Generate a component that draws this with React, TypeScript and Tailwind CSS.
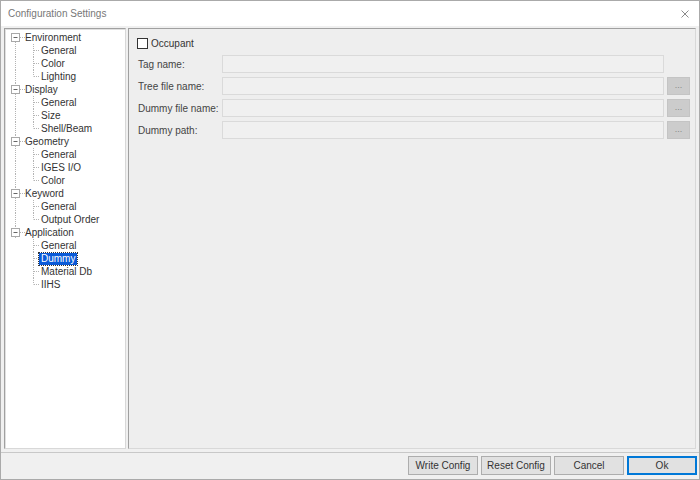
import React from "react";

type Node = { label: string; children: string[] };

const tree: Node[] = [
  { label: "Environment", children: ["General", "Color", "Lighting"] },
  { label: "Display", children: ["General", "Size", "Shell/Beam"] },
  { label: "Geometry", children: ["General", "IGES I/O", "Color"] },
  { label: "Keyword", children: ["General", "Output Order"] },
  { label: "Application", children: ["General", "Dummy", "Material Db", "IIHS"] },
];

const LINE = "#b4b4b4";

function RootGutter({ first, last }: { first: boolean; last: boolean }) {
  return (
    <svg width="20" height="13" className="shrink-0">
      {!first && <line x1="10.5" y1="0" x2="10.5" y2="2" stroke={LINE} strokeDasharray="1 1" />}
      {!last && <line x1="10.5" y1="11" x2="10.5" y2="13" stroke={LINE} strokeDasharray="1 1" />}
      <line x1="10.5" y1="11" x2="10.5" y2="13" stroke={LINE} strokeDasharray="1 1" />
      <rect x="6.5" y="2.5" width="8" height="8" fill="#fff" stroke="#a8a8a8" />
      <line x1="8.5" y1="6.5" x2="12.5" y2="6.5" stroke="#666" />
      <line x1="15" y1="6.5" x2="20" y2="6.5" stroke={LINE} strokeDasharray="1 1" />
    </svg>
  );
}

function ChildGutter({ rootCont, last }: { rootCont: boolean; last: boolean }) {
  return (
    <svg width="34" height="13" className="shrink-0">
      {rootCont && <line x1="10.5" y1="0" x2="10.5" y2="13" stroke={LINE} strokeDasharray="1 1" />}
      <line x1="28.5" y1="0" x2="28.5" y2={last ? 6.5 : 13} stroke={LINE} strokeDasharray="1 1" />
      <line x1="29" y1="6.5" x2="34" y2="6.5" stroke={LINE} strokeDasharray="1 1" />
    </svg>
  );
}

function Tree() {
  return (
    <div className="flex flex-col pt-[2px] text-[#333]">
      {tree.map((n, i) => {
        const lastRoot = i === tree.length - 1;
        return (
          <div key={n.label} className="flex flex-col">
            <div className="flex h-[13px] items-center">
              <RootGutter first={i === 0} last={lastRoot} />
              <span className="leading-[13px] whitespace-nowrap">{n.label}</span>
            </div>
            {n.children.map((c, j) => {
              const sel = n.label === "Application" && c === "Dummy";
              return (
                <div key={c + j} className="flex h-[13px] items-center">
                  <ChildGutter rootCont={!lastRoot} last={j === n.children.length - 1} />
                  <span
                    className={
                      "px-[2px] leading-[12px] whitespace-nowrap " +
                      (sel ? "bg-[#0a5ad8] text-white outline outline-1 outline-[#333] outline-dotted" : "")
                    }
                  >
                    {c}
                  </span>
                </div>
              );
            })}
          </div>
        );
      })}
    </div>
  );
}

function Field({ label, button }: { label: string; button: boolean }) {
  return (
    <div className="flex items-center h-[18px] ml-[1px]">
      <div className="w-[84px] shrink-0 text-[#444] whitespace-nowrap">{label}</div>
      <div className="w-[442px] h-[18px] border border-[#dadada] bg-[#f0f0f0]" />
      {button && (
        <div className="ml-[3px] w-[23px] h-[18px] bg-[#cccccc] border border-[#c4c4c4] flex items-center justify-center text-[#888] text-[9px] leading-none pb-[2px]">
          ...
        </div>
      )}
    </div>
  );
}

function Btn({ label, primary }: { label: string; primary?: boolean }) {
  return (
    <div
      className={
        "w-[70px] h-[19px] flex items-center justify-center bg-[#e1e1e1] text-[#333] border " +
        (primary ? "border-[#0078d7] border-2" : "border-[#adadad]")
      }
    >
      {label}
    </div>
  );
}

export default function App() {
  return (
    <div
      className="w-[700px] h-[480px] bg-[#f0f0f0] flex flex-col text-[10px] border border-[#aaaaaa] overflow-hidden"
      style={{ fontFamily: '"Liberation Sans", Arial, sans-serif' }}
    >
      <div className="h-[25px] shrink-0 bg-white flex items-center justify-between pl-[7px] pr-[10px]">
        <span className="text-[#777] text-[10px]">Configuration Settings</span>
        <svg width="8" height="8" viewBox="0 0 8 8">
          <path d="M0.5 0.5 L7.5 7.5 M7.5 0.5 L0.5 7.5" stroke="#8a8a8a" strokeWidth="1" />
        </svg>
      </div>
      <div className="flex flex-1 gap-[2px] pl-[3px] pr-[3px] pt-[2px] pb-[3px] min-h-0">
        <div className="w-[122px] bg-white border border-[#a0a0a0] border-r-[#d8d8d8] border-b-[#d8d8d8] shadow-[inset_1px_1px_0_#e0e0e0]">
          <Tree />
        </div>
        <div className="flex-1 bg-[#eeeeee] border border-[#a0a0a0] border-r-[#d8d8d8] border-b-[#d8d8d8] pl-[8px] pt-[8px] flex flex-col gap-[4px]">
          <div className="flex items-center h-[13px] mb-[1px]">
            <div className="w-[11px] h-[11px] border border-[#333] bg-white" />
            <span className="ml-[3px] text-[#333]">Occupant</span>
          </div>
          <Field label="Tag name:" button={false} />
          <Field label="Tree file name:" button />
          <Field label="Dummy file name:" button />
          <Field label="Dummy path:" button />
        </div>
      </div>
      <div className="h-[1px] bg-[#c8c8c8] shrink-0" />
      <div className="h-[26px] shrink-0 flex items-center justify-end gap-[3px] pr-[2px] pb-[1px]">
        <Btn label="Write Config" />
        <Btn label="Reset Config" />
        <Btn label="Cancel" />
        <Btn label="Ok" primary />
      </div>
    </div>
  );
}
